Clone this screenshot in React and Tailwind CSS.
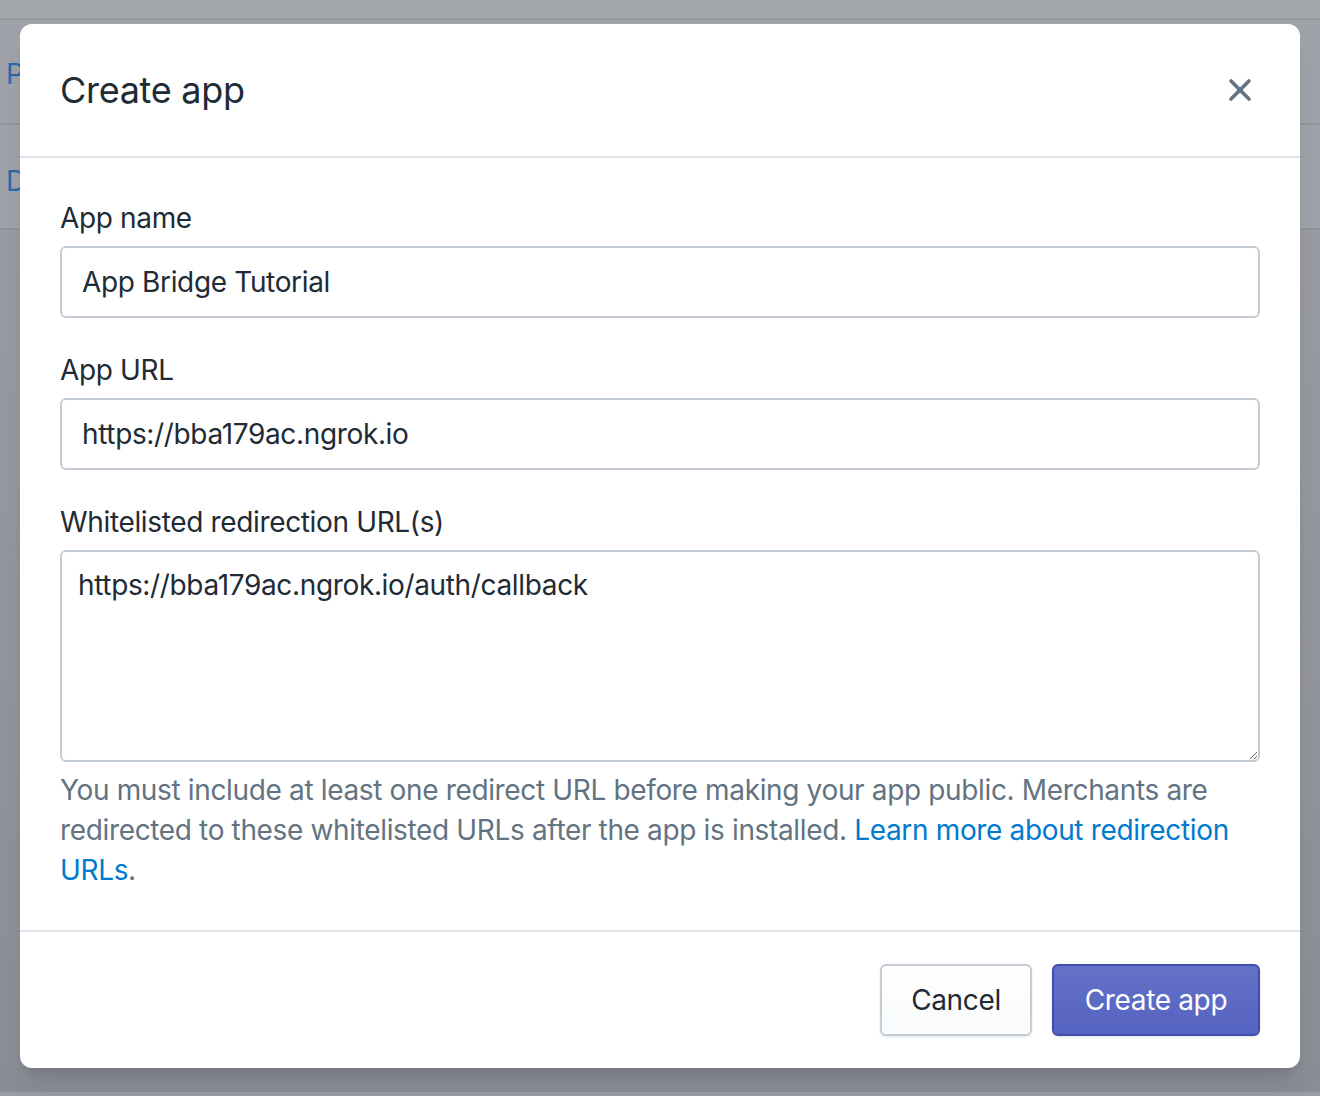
import { X } from "lucide-react";

const font = { fontFamily: "Inter, 'Noto Sans', 'Liberation Sans', sans-serif" };

function Field({ label, value }) {
  return (
    <div className="flex flex-col gap-2">
      <label className="text-[28px] leading-[40px] tracking-[-0.35px] text-[#212b36]">{label}</label>
      <div className="h-[72px] rounded-[6px] border-2 border-[#c4cdd5] bg-white px-5 flex items-center text-[28px] tracking-[-0.35px] text-[#212b36]">
        {value}
      </div>
    </div>
  );
}

export default function App() {
  return (
    <div className="relative min-h-[1096px] bg-[#9a9da3] overflow-hidden" style={font}>
      {/* dimmed page behind */}
      <div className="h-[20px] bg-[#a3a6ab] border-b-2 border-[#95989e]" />
      <div className="bg-[#9fa2a8]">
        <div className="h-[105px] border-b-2 border-[#909399] pl-[6px] pt-[34px] text-[28px] leading-[40px] text-[#2a6aa8]">P</div>
        <div className="h-[105px] border-b-2 border-[#909399] pl-[6px] pt-[36px] text-[28px] leading-[40px] text-[#2a6aa8]">D</div>
      </div>
      <div className="h-[862px] bg-gradient-to-b from-[#989ba1] via-[#92959b] to-[#8a8d94]" />

      {/* modal */}
      <div className="absolute left-[20px] top-[24px] w-[1280px] rounded-[12px] bg-white shadow-xl">
        <div className="h-[134px] flex items-center justify-between px-10 border-b-2 border-[#dfe3e8]">
          <h2 className="text-[36px] leading-[48px] tracking-[-0.3px] text-[#212b36]">Create app</h2>
          <X className="w-[36px] h-[36px] text-[#637381] mr-[2px]" strokeWidth={2.4} />
        </div>
        <div className="px-10 pt-10 pb-10 flex flex-col gap-8">
          <Field label="App name" value="App Bridge Tutorial" />
          <Field label="App URL" value="https://bba179ac.ngrok.io" />
          <div className="flex flex-col gap-2">
            <label className="text-[28px] leading-[40px] tracking-[-0.35px] text-[#212b36]">Whitelisted redirection URL(s)</label>
            <textarea
              defaultValue="https://bba179ac.ngrok.io/auth/callback"
              className="h-[212px] rounded-[6px] border-2 border-[#c4cdd5] bg-white px-4 pt-[13px] text-[28px] leading-[40px] tracking-[-0.35px] text-[#212b36] outline-none resize-y"
              style={font}
            />
            <p className="text-[28px] leading-[40px] tracking-[-0.35px] text-[#637381]">
              You must include at least one redirect URL before making your app public. Merchants are redirected to these whitelisted URLs after the app is installed.{" "}
              <a className="text-[#007ace]">Learn more about redirection URLs</a>.
            </p>
          </div>
        </div>
        <div className="border-t-2 border-[#dfe3e8] px-10 py-8 flex justify-end gap-5">
          <button className="h-[72px] w-[152px] rounded-[6px] border-2 border-[#c4cdd5] bg-gradient-to-b from-white to-[#f9fafb] text-[28px] tracking-[-0.35px] text-[#212b36] shadow-sm">
            Cancel
          </button>
          <button className="h-[72px] w-[208px] rounded-[6px] border-2 border-[#3f4eae] bg-gradient-to-b from-[#6371c7] to-[#5563c1] text-[28px] tracking-[-0.35px] text-white shadow-sm">
            Create app
          </button>
        </div>
      </div>
    </div>
  );
}
